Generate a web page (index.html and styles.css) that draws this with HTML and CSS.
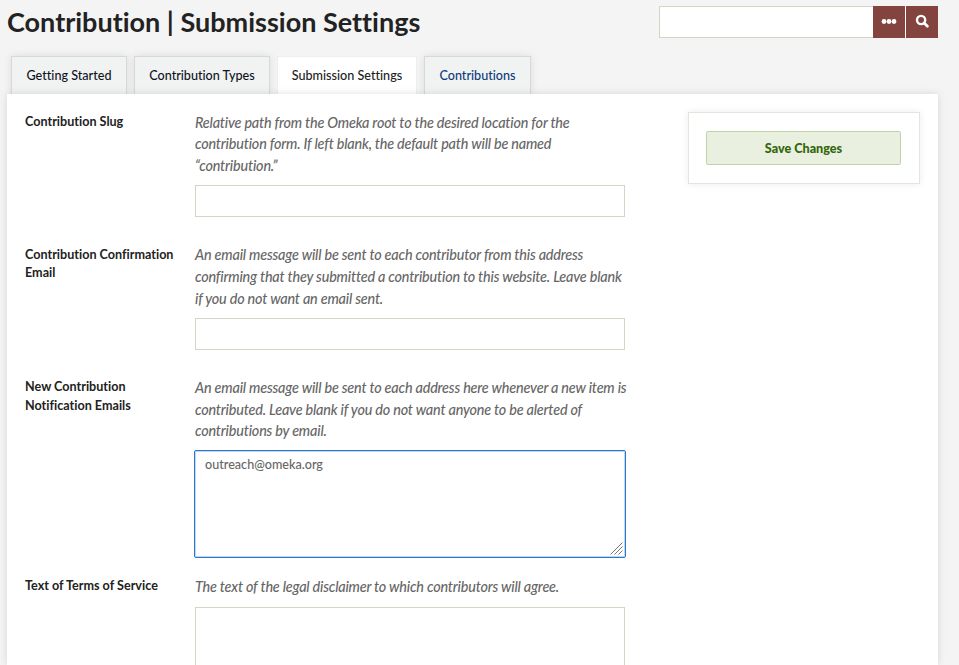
FILE: index.html
```html
<!DOCTYPE html>
<html lang="en">
<head>
<meta charset="utf-8">
<title>Contribution | Submission Settings</title>
<link rel="stylesheet" href="styles.css">
</head>
<body>
<header class="header">
  <h1 class="title">Contribution | Submission Settings</h1>
  <form class="search">
    <input class="search-input" type="text" aria-label="Search">
    <button class="search-button" type="button" aria-label="Options"><svg width="32" height="32" viewBox="0 0 32 32"><g fill="#fff"><circle cx="11" cy="15.5" r="2.4"/><circle cx="16" cy="15.5" r="2.4"/><circle cx="21" cy="15.5" r="2.4"/></g></svg></button>
    <button class="search-button" type="button" aria-label="Submit"><svg width="32" height="32" viewBox="0 0 32 32"><g fill="none" stroke="#fff"><circle cx="15.1" cy="14" r="4.1" stroke-width="2.4"/><path d="M18.2 17.1L21.4 20.3" stroke-width="2.8" stroke-linecap="round"/></g></svg></button>
  </form>
</header>
<nav class="tabs">
  <a class="tab tab-started">Getting Started</a>
  <a class="tab tab-types">Contribution Types</a>
  <a class="tab tab-settings">Submission Settings</a>
  <a class="tab tab-items">Contributions</a>
</nav>
<main class="panel">
  <form class="fields">
    <div class="field">
      <label class="label">Contribution Slug</label>
      <div class="inputs">
        <p class="hint">Relative path from the Omeka root to the desired location for the<br>contribution form. If left blank, the default path will be named<br>“contribution.”</p>
        <input class="control" type="text" aria-label="Contribution Slug">
      </div>
    </div>
    <div class="field">
      <label class="label">Contribution Confirmation<br>Email</label>
      <div class="inputs">
        <p class="hint">An email message will be sent to each contributor from this address<br>confirming that they submitted a contribution to this website. Leave blank<br>if you do not want an email sent.</p>
        <input class="control" type="text" aria-label="Contribution Confirmation Email">
      </div>
    </div>
    <div class="field field-emails">
      <label class="label">New Contribution<br>Notification Emails</label>
      <div class="inputs">
        <p class="hint">An email message will be sent to each address here whenever a new item is<br>contributed. Leave blank if you do not want anyone to be alerted of<br>contributions by email.</p>
        <div class="area area-focus">outreach@omeka.org<svg class="grip" width="13" height="13" viewBox="0 0 13 13"><path d="M.5 12.5L12.5.5M4.5 12.5L12.5 4.5M8.5 12.5L12.5 8.5" stroke="#777" fill="none"/></svg></div>
      </div>
    </div>
    <div class="field field-terms">
      <label class="label">Text of Terms of Service</label>
      <div class="inputs">
        <p class="hint">The text of the legal disclaimer to which contributors will agree.</p>
        <div class="area area-open"></div>
      </div>
    </div>
  </form>
  <aside class="save">
    <button class="save-button" type="button">Save Changes</button>
  </aside>
</main>
</body>
</html>
```
FILE: styles.css
```css
* { box-sizing: border-box; }
body {
  margin: 0;
  height: 665px;
  overflow: hidden;
  background: #f4f4f4;
  color: #222;
  font-family: Lato, sans-serif;
  font-size: 12.6px;
  font-variant-ligatures: none;
}
.header {
  display: flex;
  justify-content: space-between;
  height: 56px;
  padding: 6px 21px 0 7px;
}
.title {
  margin: 0;
  font-size: 27px;
  line-height: 32px;
  font-weight: 700;
  white-space: nowrap;
}
.search { display: flex; height: 32px; }
.search-input {
  width: 214px;
  border: 1px solid #d5d5c5;
  border-right: 0;
  background: #fff;
}
.search-button {
  width: 32px;
  height: 32px;
  padding: 0;
  border: 0;
  background: #83433e;
}
.search-button + .search-button { width: 33px; border-left: 1px solid #fff; }
.search-button svg { display: block; }
.tabs { display: flex; gap: 7px; height: 38px; padding-left: 11px; }
.tab {
  height: 38px;
  border: 1px solid #d8d8d8;
  border-bottom: 0;
  background: #f1f3f2;
  box-shadow: 0 0 8px rgba(0, 0, 0, .1);
  color: #10131f;
  font-weight: 500;
  line-height: 37px;
  text-align: center;
  white-space: nowrap;
}
.tab-started { width: 116px; }
.tab-types { width: 136px; }
.tab-settings {
  width: 140px;
  border-color: #eee;
  background: #fff;
  box-shadow: none;
  color: #222;
}
.tab-items { width: 107px; color: #0d3b7a; }
.panel {
  position: relative;
  display: flex;
  justify-content: space-between;
  width: 931px;
  height: 571px;
  margin-left: 7px;
  padding: 18px 18px 0;
  background: #fff;
  box-shadow: 0 0 8px rgba(0, 0, 0, .12);
}
.field { display: flex; height: 132.7px; }
.field-emails { height: 199px; }
.field-terms { height: 88px; }
.label {
  width: 170px;
  padding-top: .9px;
  font-weight: 700;
  line-height: 18.5px;
  white-space: nowrap;
}
.inputs { width: 430px; }
.hint {
  margin: -.3px 0 8.9px;
  color: #666;
  font-size: 14.4px;
  font-style: italic;
  font-weight: 500;
  letter-spacing: -.19px;
  line-height: 21.6px;
  white-space: nowrap;
}
.control, .area {
  display: block;
  width: 430px;
  height: 32px;
  border: 1px solid #d5d5c5;
  background: #fff;
}
.area {
  position: relative;
  height: 106px;
  padding: 4px 9px;
  color: #666;
  font-weight: 500;
  line-height: 18px;
}
.area-open { height: 58px; border-bottom: 0; }
.area-focus { outline: 1px solid #1a78f5; border-radius: 1px; }
.grip { position: absolute; right: 1px; bottom: 1px; }
.save {
  width: 232px;
  height: 72px;
  padding: 18px 18px 0 17px;
  border: 1px solid #e5e5df;
  box-shadow: 0 0 7px rgba(0, 0, 0, .08);
}
.save-button {
  display: block;
  width: 195px;
  height: 34px;
  padding: 0;
  border: 1px solid #bdd4a6;
  border-radius: 2px;
  background: #e9f0e0;
  color: #33660c;
  font: 900 12.6px Lato, sans-serif;
}
```
